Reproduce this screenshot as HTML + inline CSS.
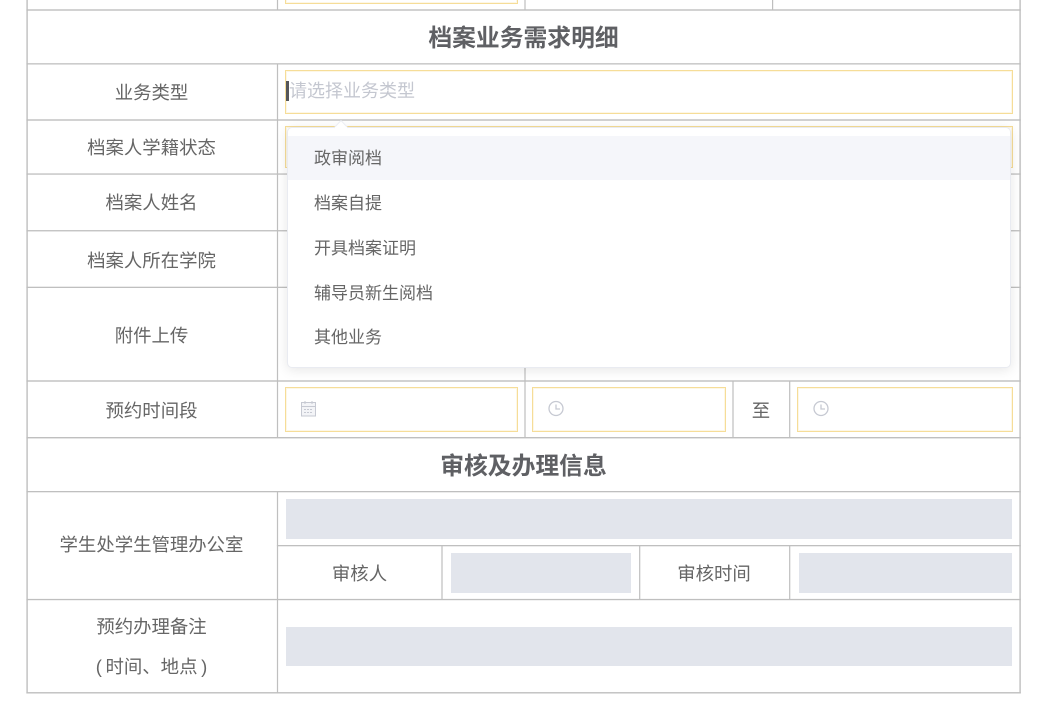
<!DOCTYPE html>
<html lang="zh"><head><meta charset="utf-8">
<style>
html,body{margin:0;padding:0;background:#fff;}
#p{position:relative;width:1051px;height:707px;overflow:hidden;background:#fff;font-family:"Liberation Sans","Noto Sans CJK SC",sans-serif;color:#666;}
.t{position:absolute;text-align:center;font-size:18.4px;white-space:nowrap;line-height:26px;}
.b{font-weight:700;font-size:23.8px;line-height:34px;color:#5f6064;}
.i{position:absolute;box-sizing:border-box;border:1px solid #f6dd98;box-shadow:inset 0 0 0 1px #fdf7e6;background:#fff;}
.g{position:absolute;background:#e2e5ec;}
.m{position:absolute;left:314px;font-size:17px;line-height:24px;white-space:nowrap;}
svg{position:absolute;}
</style></head><body><div id="p">
<svg style="left:0;top:0" width="1051" height="707" fill="#bfbfbf">
<rect x="26.4" y="0" width="1.4" height="693.5"/>
<rect x="1019.4" y="0" width="1.4" height="693.5"/>
<rect x="276.9" y="0" width="1.2" height="10"/>
<rect x="276.9" y="64" width="1.2" height="374"/>
<rect x="276.9" y="492" width="1.2" height="201"/>
<rect x="524.4" y="0" width="1.2" height="10"/>
<rect x="772" y="0" width="1.2" height="10"/>
<rect x="524.4" y="288" width="1.2" height="150"/>
<rect x="732.4" y="381" width="1.2" height="57"/>
<rect x="789.1" y="381" width="1.2" height="57"/>
<rect x="441.4" y="546" width="1.2" height="54"/>
<rect x="639.1" y="546" width="1.2" height="54"/>
<rect x="789.1" y="546" width="1.2" height="54"/>
<rect x="26.4" y="9.3" width="994.4" height="1.4"/>
<rect x="26.4" y="63.2" width="994.4" height="1.3"/>
<rect x="26.4" y="119.3" width="994.4" height="1.4"/>
<rect x="26.4" y="173.4" width="994.4" height="1.3"/>
<rect x="26.4" y="230.1" width="994.4" height="1.3"/>
<rect x="26.4" y="286.7" width="994.4" height="1.3"/>
<rect x="26.4" y="380.3" width="994.4" height="1.4"/>
<rect x="26.4" y="437" width="994.4" height="1.4"/>
<rect x="26.4" y="491" width="994.4" height="1.3"/>
<rect x="276.9" y="545" width="743.9" height="1.3"/>
<rect x="26.4" y="598.9" width="994.4" height="1.3"/>
<rect x="26.4" y="692.1" width="994.4" height="1.4"/>
</svg>

<div class="i" style="left:285px;top:-20px;width:233px;height:24px"></div>
<div class="t b" style="left:27px;width:993px;top:22px">档案业务需求明细</div>
<div class="t" style="left:27px;width:249px;top:80px">业务类型</div>
<div class="i" style="left:285px;top:70px;width:728px;height:44px"></div>
<div style="position:absolute;left:286px;top:81px;width:2.5px;height:20px;background:#55565a"></div>
<div class="t" style="left:289px;top:78px;font-size:18px;color:#c4c7d0">请选择业务类型</div>
<div class="t" style="left:27px;width:249px;top:135px">档案人学籍状态</div>
<div class="i" style="left:285px;top:126px;width:728px;height:42px"></div>
<div class="t" style="left:27px;width:249px;top:190px">档案人姓名</div>
<div class="t" style="left:27px;width:249px;top:248px">档案人所在学院</div>
<div class="t" style="left:27px;width:249px;top:323px">附件上传</div>
<div class="t" style="left:27px;width:249px;top:398px">预约时间段</div>

<div class="i" style="left:285px;top:387px;width:233px;height:45px"></div>
<div class="i" style="left:532px;top:387px;width:194px;height:45px"></div>
<div class="i" style="left:797px;top:387px;width:216px;height:45px"></div>
<div class="t" style="left:733px;width:56px;top:398px">至</div>
<svg style="left:300px;top:400px" width="17" height="17" viewBox="0 0 17 17" fill="none" stroke="#c6c9d2" stroke-width="1"><rect x="1.5" y="2.5" width="14" height="13.5" fill="#f3f4f7"/><path d="M1.5 6.5h14M5 1v3M12 1v3"/><path d="M4 9.5h9M4 12.5h9" stroke-dasharray="2 1"/></svg>
<svg style="left:547px;top:400px" width="18" height="17" viewBox="0 0 18 17" fill="none" stroke="#c6c9d2" stroke-width="1.3"><circle cx="9" cy="8.5" r="7"/><path d="M9 4.5v4.5h4"/></svg>
<svg style="left:812px;top:400px" width="18" height="17" viewBox="0 0 18 17" fill="none" stroke="#c6c9d2" stroke-width="1.3"><circle cx="9" cy="8.5" r="7"/><path d="M9 4.5v4.5h4"/></svg>

<div class="t b" style="left:27px;width:993px;top:450px">审核及办理信息</div>
<div class="t" style="left:27px;width:249px;top:532px">学生处学生管理办公室</div>
<div class="g" style="left:286px;top:499px;width:726px;height:40px"></div>
<div class="t" style="left:278px;width:163px;top:561px">审核人</div>
<div class="g" style="left:451px;top:553px;width:180px;height:40px"></div>
<div class="t" style="left:640px;width:148px;top:561px">审核时间</div>
<div class="g" style="left:799px;top:553px;width:213px;height:40px"></div>
<div class="t" style="left:27px;width:249px;top:614px">预约办理备注</div>
<div class="t" style="left:27px;width:249px;top:654px">(&#8201;时间、地点&#8201;)</div>
<div class="g" style="left:286px;top:627px;width:726px;height:39px"></div>

<div style="position:absolute;left:287px;top:127px;width:723.5px;height:241px;box-sizing:border-box;background:#fff;border:1px solid #e9ebf1;border-radius:5px;box-shadow:0 2px 12px rgba(0,0,0,.1);">
<div style="position:absolute;left:0;top:8px;width:100%;height:44px;background:#f5f6fa"></div>
</div>
<svg style="left:333px;top:119px" width="16" height="10" viewBox="0 0 16 10"><path d="M1 9 L8 1.5 L15 9" fill="#fff" stroke="#eceef3" stroke-width="1"/><rect x="2" y="8" width="12" height="2" fill="#fff"/></svg>
<div class="m" style="top:147px">政审阅档</div>
<div class="m" style="top:192px">档案自提</div>
<div class="m" style="top:237px">开具档案证明</div>
<div class="m" style="top:282px">辅导员新生阅档</div>
<div class="m" style="top:326px">其他业务</div>
</div></body></html>
